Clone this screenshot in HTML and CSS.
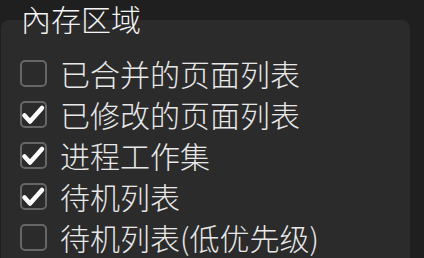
FILE: index.html
```html
<!DOCTYPE html>
<html>
<head>
    <meta charset="utf-8">
    <title>內存区域</title>
    <link rel="stylesheet" href="styles.css">
</head>
<body>
    <div class="group">
        <h2 class="group-title">內存区域</h2>
        <div class="panel">
            <label class="row">
                <span class="box"></span>
                <span class="text">已合并的页面列表</span>
            </label>
            <label class="row">
                <span class="box checked">
                    <svg viewBox="0 0 27 27" width="27" height="27"><path d="M4.5 14.5 L10 20.5 L22 7" fill="none" stroke="#fff" stroke-width="4.5" stroke-linecap="round" stroke-linejoin="round"/></svg>
                </span>
                <span class="text">已修改的页面列表</span>
            </label>
            <label class="row">
                <span class="box checked">
                    <svg viewBox="0 0 27 27" width="27" height="27"><path d="M4.5 14.5 L10 20.5 L22 7" fill="none" stroke="#fff" stroke-width="4.5" stroke-linecap="round" stroke-linejoin="round"/></svg>
                </span>
                <span class="text">进程工作集</span>
            </label>
            <label class="row">
                <span class="box checked">
                    <svg viewBox="0 0 27 27" width="27" height="27"><path d="M4.5 14.5 L10 20.5 L22 7" fill="none" stroke="#fff" stroke-width="4.5" stroke-linecap="round" stroke-linejoin="round"/></svg>
                </span>
                <span class="text">待机列表</span>
            </label>
            <label class="row">
                <span class="box"></span>
                <span class="text">待机列表(低优先级)</span>
            </label>
        </div>
    </div>
</body>
</html>
```

FILE: styles.css
```css
body {
    margin: 0;
    background-color: #1f1f1f;
    font-family: "Noto Sans CJK SC", "Noto Sans", sans-serif;
    overflow: hidden;
}

.group {
    width: 409px;
    margin-left: 1px;
}

.group-title {
    position: relative;
    margin: 0;
    padding-left: 20px;
    font-size: 30px;
    font-weight: 300;
    line-height: 36px;
    color: #f4f4f4;
}

.panel {
    margin-top: -16px;
    padding: 33px 0 20px 19px;
    background-color: #2b2b2b;
    border-radius: 8px;
}

.row {
    display: flex;
    align-items: center;
    gap: 13px;
    height: 41px;
}

.box {
    box-sizing: border-box;
    flex: none;
    width: 27px;
    height: 27px;
    border: 2px solid #666666;
    border-radius: 5px;
    display: flex;
    align-items: center;
    justify-content: center;
}

.box svg {
    display: block;
    flex: none;
}

.text {
    font-size: 30px;
    font-weight: 300;
    line-height: 41px;
    color: #e8e8e8;
}
```
